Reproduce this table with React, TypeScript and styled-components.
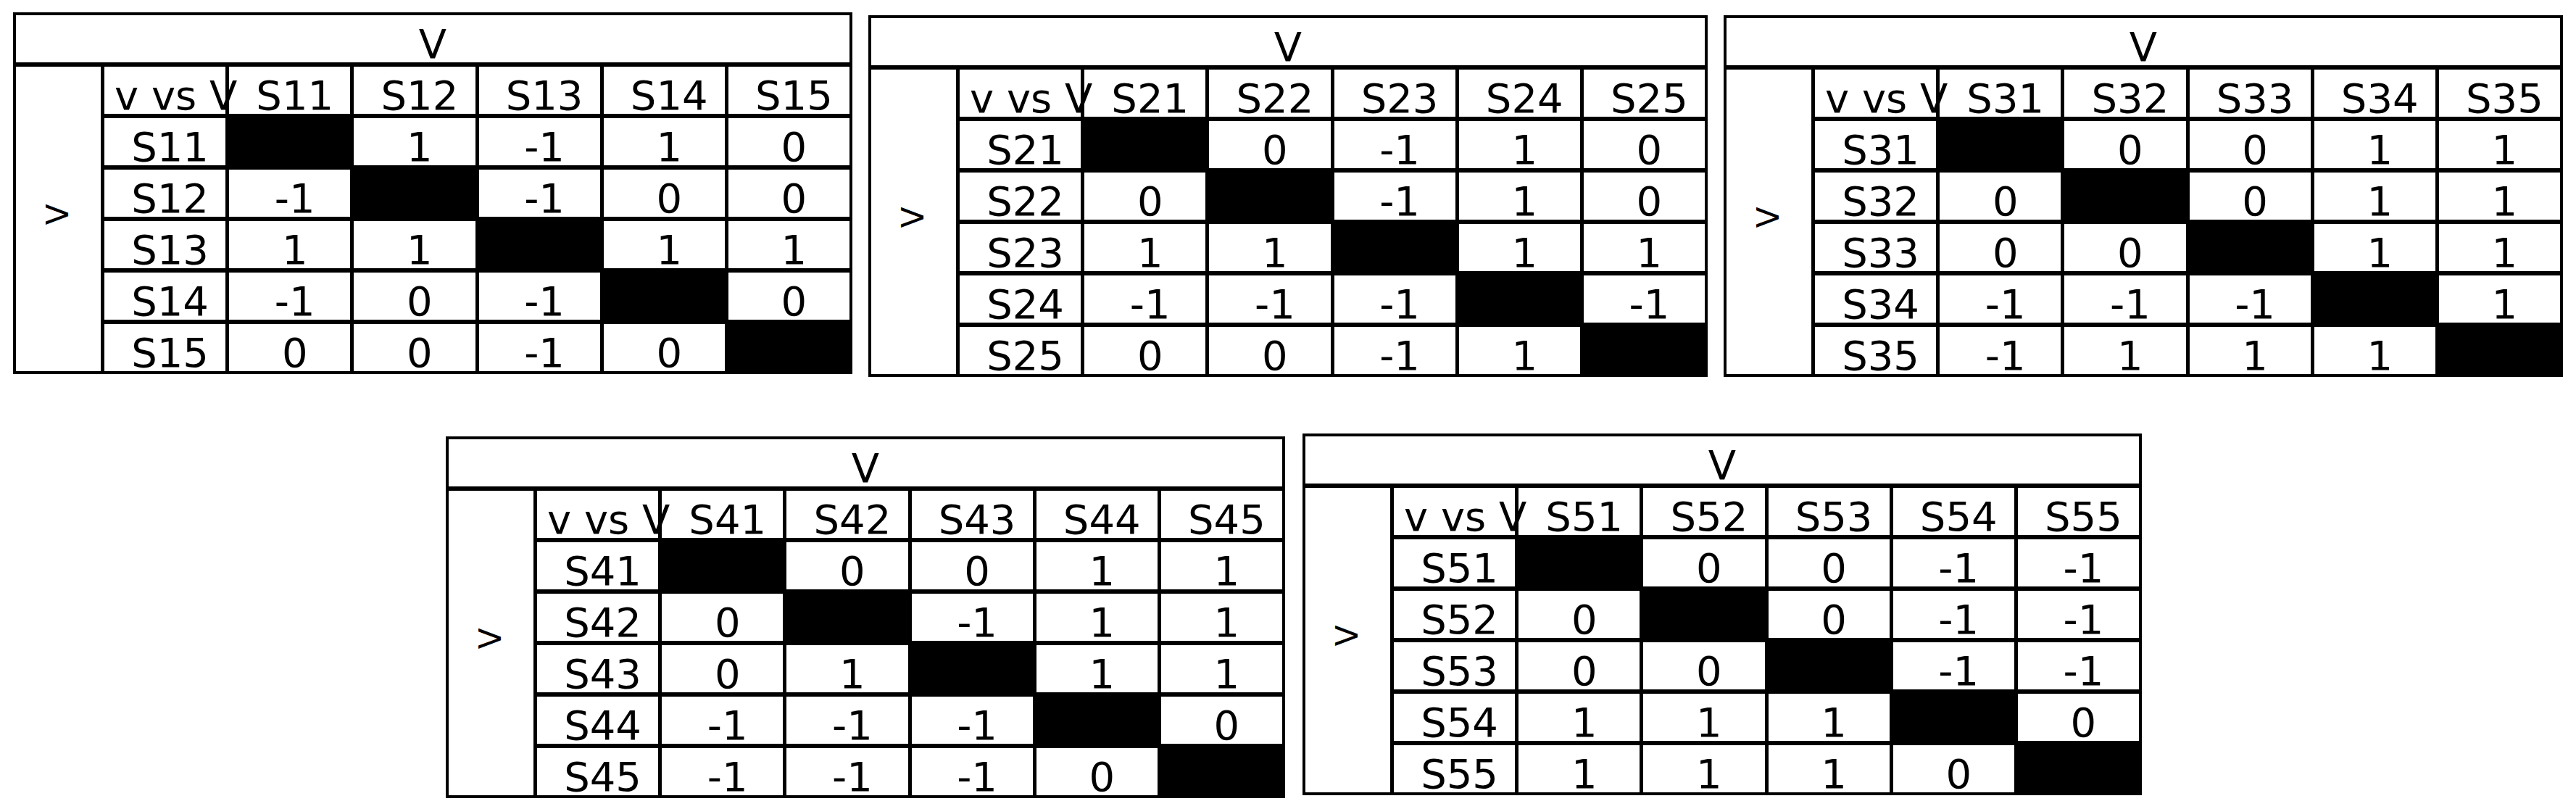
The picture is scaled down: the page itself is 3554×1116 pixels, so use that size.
import styled, { createGlobalStyle } from "styled-components";

type Value = number | null;

interface MatrixData {
  labels: string[];
  values: Value[][];
  drop: number;
}

const TOP: MatrixData[] = [
  {
    labels: ["S11", "S12", "S13", "S14", "S15"],
    values: [
      [null, 1, -1, 1, 0],
      [-1, null, -1, 0, 0],
      [1, 1, null, 1, 1],
      [-1, 0, -1, null, 0],
      [0, 0, -1, 0, null],
    ],
    drop: 0,
  },
  {
    labels: ["S21", "S22", "S23", "S24", "S25"],
    values: [
      [null, 0, -1, 1, 0],
      [0, null, -1, 1, 0],
      [1, 1, null, 1, 1],
      [-1, -1, -1, null, -1],
      [0, 0, -1, 1, null],
    ],
    drop: 4,
  },
  {
    labels: ["S31", "S32", "S33", "S34", "S35"],
    values: [
      [null, 0, 0, 1, 1],
      [0, null, 0, 1, 1],
      [0, 0, null, 1, 1],
      [-1, -1, -1, null, 1],
      [-1, 1, 1, 1, null],
    ],
    drop: 4,
  },
];

const BOTTOM: MatrixData[] = [
  {
    labels: ["S41", "S42", "S43", "S44", "S45"],
    values: [
      [null, 0, 0, 1, 1],
      [0, null, -1, 1, 1],
      [0, 1, null, 1, 1],
      [-1, -1, -1, null, 0],
      [-1, -1, -1, 0, null],
    ],
    drop: 4,
  },
  {
    labels: ["S51", "S52", "S53", "S54", "S55"],
    values: [
      [null, 0, 0, -1, -1],
      [0, null, 0, -1, -1],
      [0, 0, null, -1, -1],
      [1, 1, 1, null, 0],
      [1, 1, 1, 0, null],
    ],
    drop: 0,
  },
];

const GlobalStyle = createGlobalStyle`
  html, body {
    margin: 0;
    background: #fff;
  }
  body {
    font-family: "DejaVu Sans", Verdana, sans-serif;
    color: #000;
  }
`;

const Page = styled.div`
  width: 3554px;
  height: 1116px;
  display: flex;
  flex-direction: column;
  background: #fff;
`;

const TopRow = styled.div`
  display: flex;
  align-items: flex-start;
  gap: 22px;
  padding: 17px 0 0 18px;
`;

const BottomRow = styled.div`
  display: flex;
  align-items: flex-start;
  justify-content: center;
  gap: 24px;
  margin-top: 78px;
  padding-left: 16px;
`;

const Grid = styled.div<{ $drop: number }>`
  display: grid;
  grid-template-columns: 117px repeat(6, 1fr);
  grid-template-rows: 65px repeat(6, 65px);
  row-gap: 6px;
  column-gap: 5px;
  padding: 4px;
  width: 1158px;
  box-sizing: border-box;
  margin-top: ${(p) => p.$drop}px;
  background: #000;
  font-size: 56px;
`;

const Cell = styled.div`
  background: #fff;
  display: flex;
  align-items: flex-end;
  justify-content: center;
  padding-left: 14px;
  line-height: 50px;
  white-space: nowrap;
  min-width: 0;
`;

const Title = styled(Cell)`
  grid-column: 1 / -1;
  padding-left: 0;
`;

const SideLabel = styled.div`
  grid-column: 1;
  grid-row: 2 / -1;
  background: #fff;
  display: flex;
  align-items: center;
  justify-content: center;
  padding-bottom: 12px;
`;

const Turned = styled.span`
  display: inline-block;
  font-size: 42px;
  line-height: 1;
  transform: rotate(-90deg);
`;

const Corner = styled(Cell)`
  justify-content: flex-start;
  z-index: 1;
  overflow: visible;
`;

const ValueCell = styled(Cell)<{ $dark: boolean }>`
  background: ${(p) => (p.$dark ? "#000" : "#fff")};
`;

function Matrix({ data }: { data: MatrixData }) {
  return (
    <Grid $drop={data.drop}>
      <Title>V</Title>
      <SideLabel>
        <Turned>V</Turned>
      </SideLabel>
      <Corner>v vs V</Corner>
      {data.labels.map((l) => (
        <Cell key={"h" + l}>{l}</Cell>
      ))}
      {data.values.map((row, i) => [
        <Cell key={"r" + i}>{data.labels[i]}</Cell>,
        ...row.map((v, j) => (
          <ValueCell key={i + "-" + j} $dark={v === null}>
            {v === null ? "" : v}
          </ValueCell>
        )),
      ])}
    </Grid>
  );
}

export default function App() {
  return (
    <Page>
      <GlobalStyle />
      <TopRow>
        {TOP.map((m) => (
          <Matrix key={m.labels[0]} data={m} />
        ))}
      </TopRow>
      <BottomRow>
        {BOTTOM.map((m) => (
          <Matrix key={m.labels[0]} data={m} />
        ))}
      </BottomRow>
    </Page>
  );
}
